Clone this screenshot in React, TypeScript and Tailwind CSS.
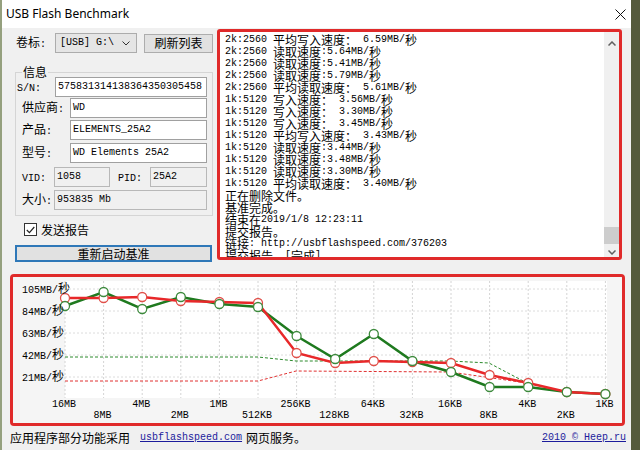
import React from "react";

const CJK = "font-['Noto_Sans_CJK_SC',sans-serif] text-[12px]";
const MONO = "font-['Liberation_Mono',monospace] text-[10px]";

// SimSun-like mix: CJK runs at 12px, latin runs in 6px-wide mono
function T({ s }: { s: string }) {
  return (
    <>
      {s.split(/([\u3000-\u303f\u4e00-\u9fff\uff00-\uffef]+)/).map((p, i) =>
        !p ? null : i % 2 ? (
          <span key={i} className={CJK}>
            {p}
          </span>
        ) : (
          <span key={i} className={MONO}>
            {p}
          </span>
        )
      )}
    </>
  );
}

const logLines = [
  "2k:2560 平均写入速度： 6.59MB/秒",
  "2k:2560 读取速度:5.64MB/秒",
  "2k:2560 读取速度:5.41MB/秒",
  "2k:2560 读取速度:5.79MB/秒",
  "2k:2560 平均读取速度： 5.61MB/秒",
  "1k:5120 写入速度： 3.56MB/秒",
  "1k:5120 写入速度： 3.30MB/秒",
  "1k:5120 写入速度： 3.45MB/秒",
  "1k:5120 平均写入速度： 3.43MB/秒",
  "1k:5120 读取速度:3.44MB/秒",
  "1k:5120 读取速度:3.48MB/秒",
  "1k:5120 读取速度:3.30MB/秒",
  "1k:5120 平均读取速度： 3.40MB/秒",
  "正在删除文件。",
  "基准完成。",
  "结束在2019/1/8 12:23:11",
  "提交报告。",
  "链接: http://usbflashspeed.com/376203",
  "提交报告。[完成]",
];

const XS = Array.from({ length: 15 }, (_, i) => 65 + i * 38.6);
const red = [298, 298, 297, 301, 302, 303, 353, 363, 361, 362, 363, 375, 383, 392, 394];
const green = [306, 292, 309, 297, 304, 307, 336, 359, 334, 361, 372, 387, 387, 392, 394];
const sizes = ["16MB", "8MB", "4MB", "2MB", "1MB", "512KB", "256KB", "128KB", "64KB", "32KB", "16KB", "8KB", "4KB", "2KB", "1KB"];
const yLabels = [
  ["105MB/", 289],
  ["84MB/", 311],
  ["63MB/", 333],
  ["42MB/", 355],
  ["21MB/", 377],
] as const;

function pts(ys: number[]) {
  return ys.map((y, i) => `${XS[i]},${y}`).join(" ");
}

function Chart() {
  return (
    <svg width="609" height="146" viewBox="13 277 609 146" className="block">
      <rect x="13" y="277" width="609" height="146" fill="#f5f5f5" />
      <rect x="65" y="281" width="542" height="117" fill="#ffffff" />
      {XS.map((x, i) => (
        <line key={i} x1={x} y1="281" x2={x} y2="398" stroke="#d4d4d4" strokeDasharray="2 2" />
      ))}
      {[289, 311, 333, 355, 377].map((y) => (
        <line key={y} x1="65" y1={y} x2="607" y2={y} stroke="#dcdcdc" strokeDasharray="2 2" />
      ))}
      <polyline
        points="65,357 258,357 296,361 450,361 489,363 527,383"
        fill="none"
        stroke="#2d8a2d"
        strokeDasharray="3 2"
      />
      <polyline
        points="65,381 258,381 296,371 450,372 527,383"
        fill="none"
        stroke="#e03030"
        strokeDasharray="3 2"
      />
      <polyline points={pts(green)} fill="none" stroke="#1f7a1f" strokeWidth="2.5" />
      <polyline points={pts(red)} fill="none" stroke="#e8282a" strokeWidth="2.5" />
      {red.map((y, i) => (
        <circle key={i} cx={XS[i]} cy={y} r="4.5" fill="#ffffff" stroke="#e0504a" strokeWidth="1.3" />
      ))}
      {green.map((y, i) => (
        <circle key={i} cx={XS[i]} cy={y} r="4.5" fill="#ffffff" stroke="#3d8a3d" strokeWidth="1.3" />
      ))}
      {yLabels.map(([t, y]) => (
        <text key={t} x="22" y={y + 4} fill="#000">
          <tspan fontFamily="Liberation Mono, monospace" fontSize="10">
            {t}
          </tspan>
          <tspan fontFamily="Noto Sans CJK SC, sans-serif" fontSize="12">
            秒
          </tspan>
        </text>
      ))}
      {sizes.map((s, i) => (
        <text
          key={s}
          x={XS[i] - 1}
          y={i % 2 ? 418 : 407}
          textAnchor="middle"
          fontFamily="Liberation Mono, monospace"
          fontSize="10"
          fill="#000"
        >
          {s}
        </text>
      ))}
    </svg>
  );
}

function Field({ text, gray, className }: { text: string; gray?: boolean; className: string }) {
  return (
    <div
      className={`h-[20px] border flex items-center pl-[2px] overflow-hidden whitespace-pre leading-[12px] ${
        gray ? "bg-[#f0f0f0] border-[#b8b8b8]" : "bg-white border-[#a0a0a0]"
      } ${className}`}
    >
      <T s={text} />
    </div>
  );
}

export default function App() {
  return (
    <div className="w-[640px] h-[450px] flex bg-[#4f5436] text-black overflow-hidden">
      <div className="w-[2px] h-full bg-[#95a07e]" />
      <div className="w-[629px] h-full bg-[#f0f0f0] flex flex-col">
        <div className="h-[28px] bg-white flex items-center justify-between pl-[4px] pr-[5px]">
          <span className="font-['Noto_Sans',sans-serif] text-[12px] text-black">USB Flash Benchmark</span>
          <svg width="11" height="11" viewBox="0 0 11 11">
            <path d="M0.5 0.5 L10.5 10.5 M10.5 0.5 L0.5 10.5" stroke="#111" strokeWidth="1" />
          </svg>
        </div>

        <div className="h-[246px] flex items-start">
          {/* left panel */}
          <div className="w-[215px] flex flex-col leading-[12px]">
            <div className="mt-[5px] h-[20px] flex items-center ml-[14px]">
              <span className="w-[39px]">
                <T s="卷标:" />
              </span>
              <div className="w-[82px] h-[20px] border border-[#acacac] bg-[#e5e5e5] flex items-center justify-between pl-[4px] pr-[6px]">
                <span className={`${MONO} whitespace-pre`}>[USB] G:\</span>
                <svg width="8" height="5" viewBox="0 0 8 5">
                  <path d="M0.5 0.5 L4 4 L7.5 0.5" fill="none" stroke="#333" />
                </svg>
              </div>
              <div className="ml-[7px] w-[69px] h-[19px] border border-[#adadad] bg-[#e1e1e1] flex items-center justify-center">
                <span className={CJK}>刷新列表</span>
              </div>
            </div>

            <div className="relative mt-[19px] ml-[13px] w-[198px] border border-[#d5d5d5] pt-[4px] pb-[5px] pr-[5px]">
              <span className={`absolute -top-[7px] left-[6px] px-[1px] bg-[#f0f0f0] ${CJK}`}>信息</span>
              <div className="flex items-center ml-[1px]">
                <span className="w-[38px]">
                  <T s="S/N:" />
                </span>
                <Field text="575831314138364350305458" className="w-[152px]" />
              </div>
              <div className="flex items-center ml-[6px] mt-[1px]">
                <span className="w-[48px]">
                  <T s="供应商:" />
                </span>
                <Field text="WD" className="w-[137px]" />
              </div>
              <div className="flex items-center ml-[6px] mt-[2px]">
                <span className="w-[48px]">
                  <T s="产品:" />
                </span>
                <Field text="ELEMENTS_25A2" className="w-[137px]" />
              </div>
              <div className="flex items-center ml-[6px] mt-[3px]">
                <span className="w-[48px]">
                  <T s="型号:" />
                </span>
                <Field text="WD Elements 25A2" className="w-[137px]" />
              </div>
              <div className="flex items-center ml-[6px] mt-[4px]">
                <span className="w-[32px]">
                  <T s="VID:" />
                </span>
                <Field text="1058" gray className="w-[56px]" />
                <span className="ml-[8px] w-[32px]">
                  <T s="PID:" />
                </span>
                <Field text="25A2" gray className="w-[57px]" />
              </div>
              <div className="flex items-center ml-[6px] mt-[3px]">
                <span className="w-[32px]">
                  <T s="大小:" />
                </span>
                <Field text="953835 Mb" gray className="w-[153px]" />
              </div>
            </div>

            <div className="mt-[7px] ml-[22px] flex items-center gap-[4px]">
              <div className="w-[13px] h-[13px] border border-[#333] bg-white flex items-center justify-center">
                <svg width="9" height="8" viewBox="0 0 9 8">
                  <path d="M0.8 4 L3.4 6.6 L8.3 1" fill="none" stroke="#222" strokeWidth="1.2" />
                </svg>
              </div>
              <span className={CJK}>发送报告</span>
            </div>

            <div className="mt-[9px] ml-[13px] w-[197px] h-[17px] border-2 border-[#2f78b8] bg-[#e1e1e1] flex items-center justify-center">
              <span className={CJK}>重新启动基准</span>
            </div>
          </div>

          {/* log box */}
          <div className="mt-[1px] w-[405px] h-[231px] border-[3px] border-[#e02a2a] rounded-[3px] bg-white flex overflow-hidden">
            <div className="flex-1 pt-[2px] pl-[5px] overflow-hidden leading-[12px]">
              {logLines.map((l, i) => (
                <div key={i} className="h-[12px] whitespace-pre flex items-center">
                  <T s={l} />
                </div>
              ))}
            </div>
            <div className="w-[15px] h-full bg-[#f0f0f0] flex flex-col items-center justify-between pt-[9px] pb-[2px]">
              <svg width="8" height="5" viewBox="0 0 8 5">
                <path d="M0.5 4.5 L4 1 L7.5 4.5" fill="none" stroke="#606060" strokeWidth="1.5" />
              </svg>
              <div className="flex flex-col items-center gap-[6px]">
                <div className="w-[15px] h-[17px] bg-[#cdcdcd]" />
                <svg width="8" height="5" viewBox="0 0 8 5">
                  <path d="M0.5 0.5 L4 4 L7.5 0.5" fill="none" stroke="#606060" strokeWidth="1.5" />
                </svg>
              </div>
            </div>
          </div>
        </div>

        {/* chart */}
        <div className="ml-[8px] w-[615px] h-[152px] border-[3px] border-[#e02a2a] rounded-[4px] overflow-hidden">
          <Chart />
        </div>

        {/* status */}
        <div className="h-[24px] flex items-center justify-between pl-[8px] pr-[5px] leading-[12px]">
          <div className="flex items-center">
            <span className={CJK}>应用程序部分功能采用</span>
            <span className={`${MONO} ml-[10px] text-[#1c1c9c] underline`}>usbflashspeed.com</span>
            <span className={`${CJK} ml-[4px]`}>网页服务。</span>
          </div>
          <span className={`${MONO} text-[#1c1c9c] underline whitespace-pre`}>2010 © Heep.ru</span>
        </div>
      </div>
      <div className="flex-1 h-full bg-[#555a3c]" />
    </div>
  );
}
